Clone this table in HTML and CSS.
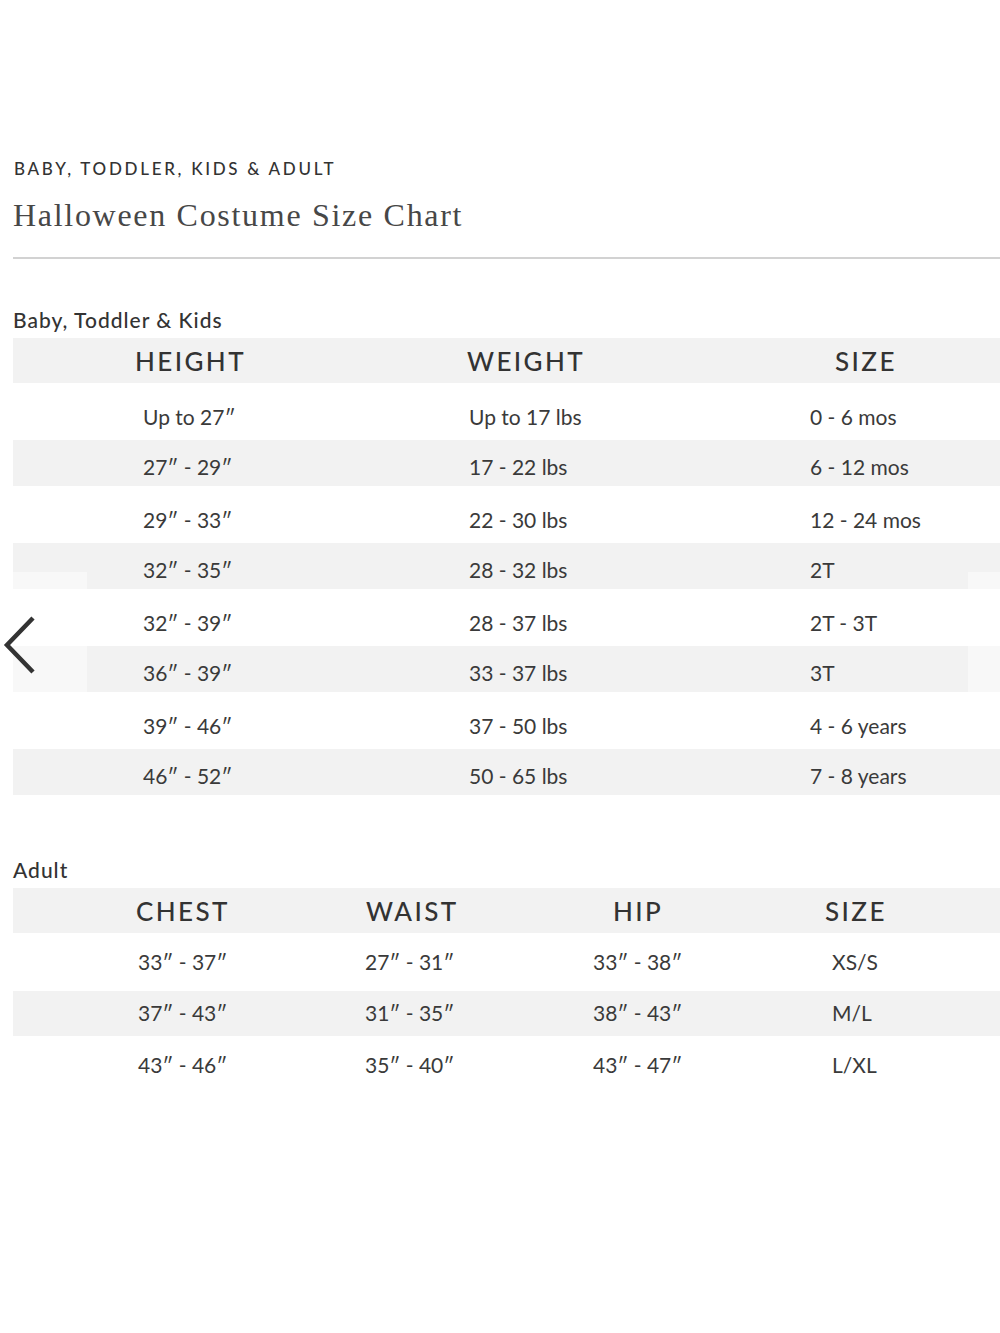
FILE: index.html
```html
<!DOCTYPE html>
<html lang="en">
<head>
<meta charset="utf-8">
<title>Halloween Costume Size Chart</title>
<link rel="stylesheet" href="styles.css">
</head>
<body>
<main class="page">
  <p class="eyebrow">BABY, TODDLER, KIDS &amp; ADULT</p>
  <h1 class="title">Halloween Costume Size Chart</h1>
  <hr class="rule">

  <section class="chart kids">
    <h2 class="chart-label">Baby, Toddler &amp; Kids</h2>
    <div class="table">
      <div class="row head"><span>HEIGHT</span><span>WEIGHT</span><span>SIZE</span></div>
      <div class="row"><span>Up to 27″</span><span>Up to 17 lbs</span><span>0 - 6 mos</span></div>
      <div class="row"><span>27″ - 29″</span><span>17 - 22 lbs</span><span>6 - 12 mos</span></div>
      <div class="row"><span>29″ - 33″</span><span>22 - 30 lbs</span><span>12 - 24 mos</span></div>
      <div class="row"><span>32″ - 35″</span><span>28 - 32 lbs</span><span>2T</span></div>
      <div class="row"><span>32″ - 39″</span><span>28 - 37 lbs</span><span>2T - 3T</span></div>
      <div class="row"><span>36″ - 39″</span><span>33 - 37 lbs</span><span>3T</span></div>
      <div class="row"><span>39″ - 46″</span><span>37 - 50 lbs</span><span>4 - 6 years</span></div>
      <div class="row"><span>46″ - 52″</span><span>50 - 65 lbs</span><span>7 - 8 years</span></div>
      <button class="nav-btn prev" aria-label="Previous"></button>
      <button class="nav-btn next" aria-label="Next"></button>
      <svg class="chevron" width="36" height="60" viewBox="0 0 36 60" aria-hidden="true">
        <polyline points="31,3 5,30 31,57" fill="none" stroke="#333" stroke-width="4.5" stroke-linejoin="miter"/>
      </svg>
    </div>
  </section>

  <section class="chart adult">
    <h2 class="chart-label">Adult</h2>
    <div class="table">
      <div class="row head"><span>CHEST</span><span>WAIST</span><span>HIP</span><span>SIZE</span></div>
      <div class="row"><span>33″ - 37″</span><span>27″ - 31″</span><span>33″ - 38″</span><span>XS/S</span></div>
      <div class="row"><span>37″ - 43″</span><span>31″ - 35″</span><span>38″ - 43″</span><span>M/L</span></div>
      <div class="row"><span>43″ - 46″</span><span>35″ - 40″</span><span>43″ - 47″</span><span>L/XL</span></div>
    </div>
  </section>
</main>
</body>
</html>
```

FILE: styles.css
```css
* { box-sizing: border-box; }

html, body {
  margin: 0;
  padding: 0;
  background: #fff;
  overflow-x: hidden;
}

.page {
  padding: 159px 0 0 13px;
  font-family: Lato, "Liberation Sans", sans-serif;
  color: #363636;
}

.eyebrow {
  margin: 0;
  padding-left: 1px;
  font-size: 17px;
  line-height: 20px;
  letter-spacing: 2.7px;
  font-weight: 500;
  color: #333;
}

.title {
  margin: 18px 0 0;
  font-family: "Liberation Serif", serif;
  font-weight: 400;
  font-size: 32px;
  line-height: 36px;
  letter-spacing: 1.7px;
  color: #474747;
}

.rule {
  margin: 24px 0 0;
  border: 0;
  height: 2px;
  background: #d2d2d2;
}

.chart-label {
  margin: 0 0 6px;
  font-size: 21px;
  line-height: 24px;
  font-weight: 500;
  letter-spacing: 1px;
  color: #333;
}

.kids { margin-top: 49px; }
.adult { margin-top: 63px; }

.table {
  position: relative;
}

.row {
  display: grid;
  font-size: 21px;
  line-height: 25px;
  color: #3a3a3a;
}

.row.head {
  background: #f2f2f2;
  height: 45px;
  font-size: 26px;
  line-height: 45px;
  letter-spacing: 2.4px;
  font-weight: 500;
  color: #333;
  padding-top: 1px;
}

/* kids */
.kids .row {
  grid-template-columns: 326px 341px 1fr;
  padding-left: 130px;
}
.kids .row.head {
  grid-template-columns: 332px 368px 1fr;
  padding-left: 122px;
}
.kids .row:nth-child(even) {
  padding-top: 21px;
  padding-bottom: 11px;
}
.kids .row:nth-child(odd):not(.head) {
  background: #f2f2f2;
  padding-top: 14px;
  padding-bottom: 7px;
}

/* adult */
.adult .row {
  grid-template-columns: 227px 228px 239px 1fr;
  padding-left: 125px;
}
.adult .row.head {
  grid-template-columns: 230px 247px 212px 1fr;
  padding-left: 123px;
}
.adult .row:nth-child(even) {
  padding-top: 16px;
  padding-bottom: 17px;
}
.adult .row:nth-child(odd):not(.head) {
  background: #f2f2f2;
  padding-top: 9px;
  padding-bottom: 11px;
}

/* carousel controls over the table */
.nav-btn {
  position: absolute;
  top: 234px;
  height: 148px;
  border: 0;
  padding: 0;
  background: rgba(255, 255, 255, 0.45);
}
.nav-btn.prev { left: 0; width: 74px; }
.nav-btn.next { right: 0; width: 32px; }

.chevron {
  position: absolute;
  left: -11px;
  top: 277px;
}
```
